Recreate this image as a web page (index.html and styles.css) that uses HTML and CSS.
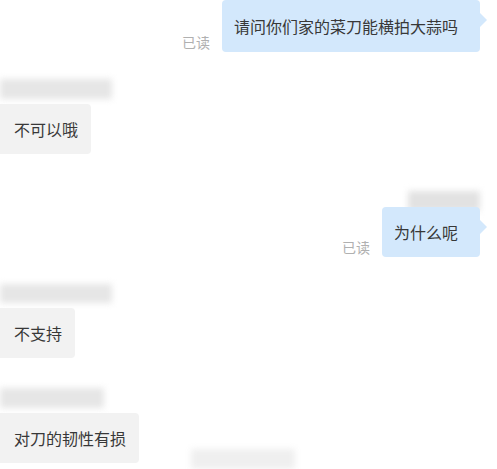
FILE: index.html
```html
<!DOCTYPE html>
<html lang="zh">
<head>
  <meta charset="UTF-8">
  <title>聊天记录</title>
  <link rel="stylesheet" href="styles.css">
</head>
<body>
  <div class="chat">
    <div class="msg out first">
      <span class="read">已读</span>
      <div class="bubble blue">请问你们家的菜刀能横拍大蒜吗</div>
    </div>

    <div class="name left"></div>
    <div class="msg in">
      <div class="bubble gray">不可以哦</div>
    </div>

    <div class="name right"></div>
    <div class="msg out">
      <span class="read">已读</span>
      <div class="bubble blue">为什么呢</div>
    </div>

    <div class="name left"></div>
    <div class="msg in">
      <div class="bubble gray">不支持</div>
    </div>

    <div class="name left short"></div>
    <div class="msg in">
      <div class="bubble gray">对刀的韧性有损</div>
    </div>

    <div class="time"></div>
  </div>
</body>
</html>
```

FILE: styles.css
```css
body {
  margin: 0;
  padding: 0;
  background: #ffffff;
  font-family: "Noto Sans CJK SC", "Noto Sans", sans-serif;
  color: #383838;
  overflow: hidden;
}

.chat {
  width: 497px;
  height: 469px;
  display: flex;
  flex-direction: column;
}

.msg {
  display: flex;
  align-items: flex-end;
}

.msg.out {
  justify-content: flex-end;
  padding-right: 17px;
}

.bubble {
  position: relative;
  height: 50px;
  line-height: 50px;
  font-size: 16px;
  border-radius: 4px;
  white-space: nowrap;
}

.bubble.blue {
  background: #d3e8fc;
  padding: 0 22px 0 12px;
}

.bubble.blue::after {
  content: "";
  position: absolute;
  right: -7px;
  top: 13px;
  border-top: 7px solid transparent;
  border-bottom: 7px solid transparent;
  border-left: 7px solid #d3e8fc;
}

.bubble.gray {
  background: #f2f2f2;
  padding: 0 13px 0 14px;
  border-radius: 0 4px 4px 0;
}

.msg.first .bubble {
  height: 52px;
  line-height: 52px;
}

.read {
  font-size: 14px;
  color: #b0b0b0;
  margin-right: 12px;
  margin-bottom: 1px;
  line-height: 18px;
}

.name {
  height: 20px;
  background: #e6e6e6;
  filter: blur(3px);
}

.name.left {
  width: 112px;
  margin-top: 27px;
  margin-bottom: 5px;
}

.name.right {
  width: 72px;
  align-self: flex-end;
  margin-right: 17px;
  margin-top: 37px;
  margin-bottom: -4px;
  background: #e2e2e2;
}

.msg.in + .name.left {
  width: 112px;
  margin-top: 31px;
}

.msg.in + .name.left.short {
  width: 104px;
  margin-top: 30px;
}

.time {
  width: 104px;
  height: 20px;
  margin-left: 191px;
  margin-top: -14px;
  background: #efefef;
  filter: blur(3px);
}
```
